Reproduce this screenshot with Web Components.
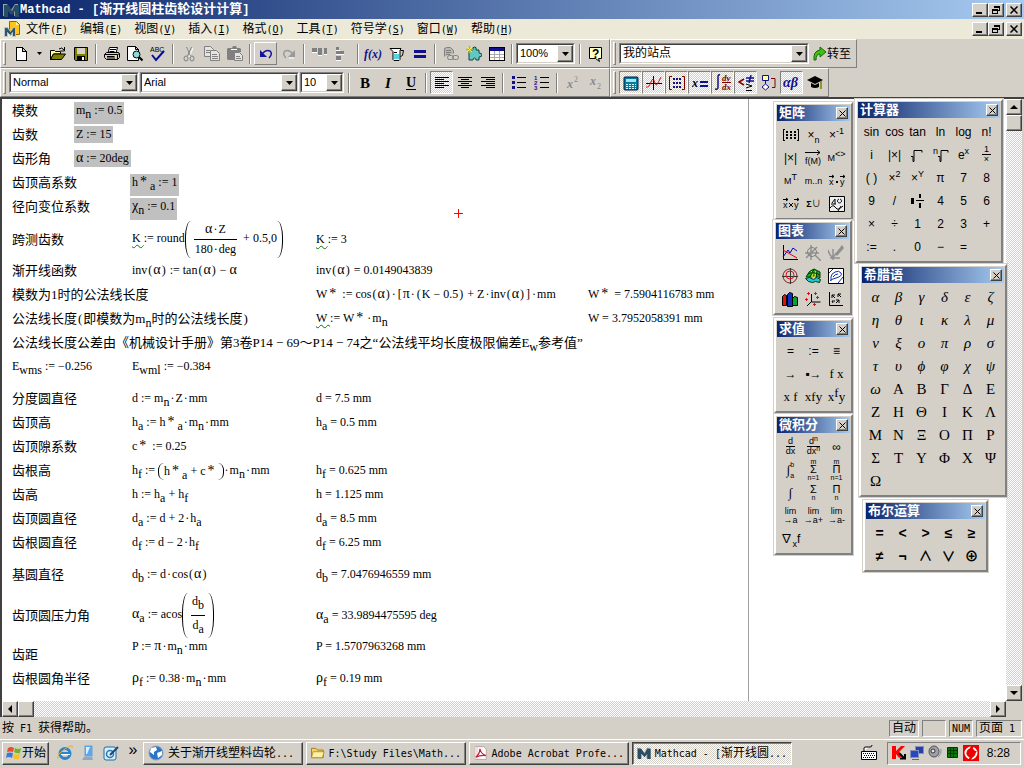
<!DOCTYPE html>
<html lang="zh-CN">
<head>
<meta charset="utf-8">
<title>Mathcad</title>
<style>
  :root {
    --face: #d4d0c8;
    --shadow: #808080;
    --dark: #404040;
    --caption: linear-gradient(to right, #0a246a, #a6caf0);
    --dither: conic-gradient(#fff 25%, #d4d0c8 0 50%, #fff 0 75%, #d4d0c8 0) 0 0 / 2px 2px;
    --ui: "Liberation Sans", "Noto Sans CJK SC", sans-serif;
    --song: "DejaVu Sans Mono", "Noto Sans CJK SC", monospace;
    --math: "Liberation Serif", "Noto Sans CJK SC", serif;
  }

  body {
    margin: 0;
    height: 100vh;
    overflow: hidden;
    display: flex;
    flex-direction: column;
    background: var(--face);
    color: #000;
    font: 12px/16px var(--ui);
  }
</style>
</head>
<body>
<title-bar></title-bar>
<menu-bar></menu-bar>

<tool-row>
  <tool-bar>
    <tool-button icon="new" label="新建"></tool-button>
    <tool-button icon="drop" label="新建选项" narrow></tool-button>
    <tool-button icon="open" label="打开"></tool-button>
    <tool-button icon="save" label="保存"></tool-button>
    <tool-sep></tool-sep>
    <tool-button icon="print" label="打印"></tool-button>
    <tool-button icon="preview" label="打印预览"></tool-button>
    <tool-button icon="spell" label="拼写检查"></tool-button>
    <tool-sep></tool-sep>
    <tool-button icon="cut" label="剪切"></tool-button>
    <tool-button icon="copy" label="复制"></tool-button>
    <tool-button icon="paste" label="粘贴"></tool-button>
    <tool-sep></tool-sep>
    <tool-button icon="undo" label="撤消" raised></tool-button>
    <tool-button icon="redo" label="重做"></tool-button>
    <tool-sep></tool-sep>
    <tool-button icon="across" label="水平对齐"></tool-button>
    <tool-button icon="down" label="垂直对齐"></tool-button>
    <tool-sep></tool-sep>
    <tool-button icon="fx" label="插入函数"></tool-button>
    <tool-button icon="unit" label="插入单位"></tool-button>
    <tool-button icon="calc" label="计算"></tool-button>
    <tool-sep></tool-sep>
    <tool-button icon="link" label="超链接"></tool-button>
    <tool-button icon="component" label="组件"></tool-button>
    <tool-button icon="table" label="表格"></tool-button>
    <tool-sep></tool-sep>
    <combo-box value="100%" label="缩放" style="width:59px"></combo-box>
    <tool-sep></tool-sep>
    <tool-button icon="help" label="帮助"></tool-button>
  </tool-bar>
  <tool-bar>
    <combo-box value="我的站点" label="地址" style="width:190px" wide></combo-box>
    <tool-button icon="go" label="转至" text="转至"></tool-button>
  </tool-bar>
</tool-row>

<tool-row>
  <tool-bar>
    <combo-box value="Normal" label="样式" style="width:130px"></combo-box>
    <combo-box value="Arial" label="字体" style="width:159px"></combo-box>
    <combo-box value="10" label="字号" style="width:44px"></combo-box>
    <tool-sep></tool-sep>
    <tool-button icon="bold" label="加粗"></tool-button>
    <tool-button icon="italic" label="斜体"></tool-button>
    <tool-button icon="under" label="下划线"></tool-button>
    <tool-sep></tool-sep>
    <tool-button icon="left" label="左对齐" pressed></tool-button>
    <tool-button icon="center" label="居中"></tool-button>
    <tool-button icon="right" label="右对齐"></tool-button>
    <tool-sep></tool-sep>
    <tool-button icon="bullets" label="项目符号"></tool-button>
    <tool-button icon="numbers" label="编号"></tool-button>
    <tool-sep></tool-sep>
    <tool-button icon="sup" label="上标"></tool-button>
    <tool-button icon="sub" label="下标"></tool-button>
  </tool-bar>
  <tool-bar>
    <tool-button icon="keypad" label="计算器" pressed></tool-button>
    <tool-button icon="graph" label="图表" pressed></tool-button>
    <tool-button icon="matrix" label="矩阵" pressed></tool-button>
    <tool-button icon="eval" label="求值" pressed></tool-button>
    <tool-button icon="calculus" label="微积分" pressed></tool-button>
    <tool-button icon="boolean" label="布尔运算" pressed></tool-button>
    <tool-button icon="program" label="编程"></tool-button>
    <tool-button icon="greek" label="希腊语" pressed></tool-button>
    <tool-button icon="symbolic" label="符号"></tool-button>
  </tool-bar>
</tool-row>

<work-area>
  <math-sheet></math-sheet>
  <tool-palette slot="float" caption="矩阵" keys="matrix" cols="3" style="left:772px;top:3px"></tool-palette>
  <tool-palette slot="float" caption="图表" keys="graph" cols="3" style="left:771px;top:121px"></tool-palette>
  <tool-palette slot="float" caption="求值" keys="eval" cols="3" style="left:772px;top:219px"></tool-palette>
  <tool-palette slot="float" caption="微积分" keys="calculus" cols="3" style="left:772px;top:315px"></tool-palette>
  <tool-palette slot="float" caption="计算器" keys="calculator" cols="6" style="left:853px;top:0"></tool-palette>
  <tool-palette slot="float" caption="希腊语" keys="greek" cols="6" style="left:857px;top:165px"></tool-palette>
  <tool-palette slot="float" caption="布尔运算" keys="boolean" cols="5" style="left:861px;top:401px"></tool-palette>
</work-area>

<status-bar></status-bar>

<task-bar>
  <task-button icon="earth">关于渐开线塑料齿轮...</task-button>
  <task-button icon="folder">F:\Study Files\Math...</task-button>
  <task-button icon="pdf">Adobe Acrobat Profe...</task-button>
  <task-button icon="logo" active>Mathcad - [渐开线圆...</task-button>
</task-bar>

<script>
const svg = (body, w = 16, h = 16) =>
    `<svg width="${w}" height="${h}" viewBox="0 0 ${w} ${h}" fill="none" stroke-width="1" aria-hidden="true">${body}</svg>`;

const lines = (list, color = '#000') =>
    `<path shape-rendering="crispEdges" stroke="${color}" d="${list.map(([x, y, w]) => `M${x} ${y + .5}h${w}`).join('')}"/>`;

const text = (str, x, y, style) => `<text x="${x}" y="${y}" stroke="none" style="${style}">${str}</text>`;

const serif = 'font-family:Liberation Serif,serif;';
const sans = 'font-family:Liberation Sans,sans-serif;';

const icons = {
  logo: svg(`<path fill="#9aa4a8" d="M0 14V2h4l4 6 4-6h3v12h-4V8l-3 4-3-4v6z"/><path fill="#274e63" d="M1 15V3l4 0 4 6 3-6h4v12h-4V9l-3 4-4-4v6z"/>`),
  doc: svg(`<path fill="#ffc619" stroke="#a05a00" d="M5.500 .5h7l3 3v10h-10z"/><path fill="#fff3b0" d="M12 1v3h3z"/><path fill="#31566c" stroke="#b9c5cc" d="M.5 15.500v-9h3l3 4 3-4h2v9h-3v-4l-2 3-3-3v4z"/>`),
  new: svg(`<path shape-rendering="crispEdges" fill="#fff" stroke="#000" d="M3.500 1.500h6l4 4v9h-10zM9.500 1.500v4h4"/>`),
  drop: svg(`<path fill="#000" d="M0 0h5L2.500 3z"/>`, 5, 3),
  open: svg(`<path fill="#ffff9c" stroke="#000" d="M.5 13.500v-9h4l1 1h5v2.500h-7z"/><path fill="#808000" stroke="#000" d="M.5 13.500l3-5.500h12l-4 5.500z"/><path stroke="#000" d="M9 3q3-2.500 5 1M14.500 1v4h-4"/>`),
  save: svg(`<path fill="#808000" stroke="#000" d="M1.500 1.500h13v13h-12l-1-1z"/><path fill="#d4d0c8" d="M4 2h8v6H4z"/><path fill="#000" d="M4 10h8v4H4z"/><path fill="#fff" d="M9 11h2v3H9z"/>`),
  print: svg(`<path fill="#fff" stroke="#000" d="M4 7l1.500-5.500h8L12 7"/><path fill="#d4d0c8" stroke="#000" d="M.5 8.500l2-2h12l1 1v4l-2 2h-11l-2-2zM.5 8.500h13l2-1M13.500 8.500v5"/><path stroke="#000" d="M6 3.500h6M5.500 5.500h5M3 10.500h8M3 12h8"/><path fill="#ff0" d="M10 9.500h2v1h-2z"/>`),
  preview: svg(`<path fill="#fff" stroke="#000" d="M.5 .5h8l3 3v11H.5zM8.500 .5v3h3"/><circle cx="9.500" cy="8.500" r="3.500" fill="#8cd7d9" stroke="#000"/><path stroke="#000" stroke-width="2" d="M12 11l3.500 3.500"/>`),
  spell: svg(`${text('ABC', 0, 6, sans + 'font-size:7px;fill:#000')}<path stroke="#0a0a96" stroke-width="2" d="M2 9l4 5 8-9"/>`),
  cut: svg(`<path stroke="#fff" d="M6 2l4 9M12 2L8 11"/><path stroke="#808080" d="M5.500 1l4 9M10.500 1l-4 9"/><ellipse cx="5" cy="12.500" rx="2" ry="2.500" stroke="#808080"/><ellipse cx="11" cy="12.500" rx="2" ry="2.500" stroke="#808080"/>`),
  copy: svg(`<path stroke="#808080" fill="#e6e4df" d="M.5 .5h6l3 3v7h-9z"/><path stroke="#808080" fill="#e6e4df" d="M6.500 4.500h6l3 3v7h-9z"/><path stroke="#808080" d="M2 4.500h4M2 6.500h4M8 8.500h5M8 10.500h6M8 12.500h6"/>`),
  paste: svg(`<path fill="#808080" d="M1 2h4l1-2h3l1 2h3l1 1v3H8v8H1L0 13V3z"/><path stroke="#808080" fill="#e6e4df" d="M7.500 6.500h5l3 3v5h-8z"/><path stroke="#808080" d="M9 10.500h4M9 12.500h5"/><path stroke="#fff" d="M4 3.500h6"/>`),
  undo: svg(`<path stroke="#1414a0" stroke-width="1.500" d="M4 8q4-5 8-3q3 3-1 7"/><path fill="#1414a0" d="M2 4v7h7z"/>`),
  redo: svg(`<path stroke="#fff" d="M13 12H8"/><path stroke="#9a9a9a" stroke-width="1.500" d="M12 8q-4-5-8-3q-3 3 1 7"/><path fill="#9a9a9a" d="M14 4v7H7z"/>`),
  across: svg(`<path fill="#808080" d="M0 2h5v4H0zM6 2h4v7H6zM12 2h3v6h-3z"/><path stroke="#fff" d="M0 6.500h5M6 9.500h4M12 8.500h3"/>`),
  down: svg(`<path fill="#808080" d="M1 1h3v3H1zM1 5h8v3H1zM1 10h5v4H1z"/><path stroke="#fff" d="M1 4.500h4M1 8.500h8M1 14.500h5"/>`),
  fx: svg(text('f(x)', 0, 12, serif + 'font-size:12px;font-weight:bold;font-style:italic;fill:#10108c'), 20, 16),
  unit: svg(`<path fill="#fff" stroke="#000" d="M1 2.500h11l-1 2v9l-1 1H5l-1-1v-8z"/><path fill="#58d3e2" d="M5 8h5v5H5z"/><path stroke="#000" d="M11.500 4.500h3l-1 5-2 1M5 6.500h3"/>`),
  calc: svg(`<path fill="#10108c" d="M2 4h12v3H2zM2 9h12v3H2z"/>`),
  link: svg(`<path fill="#b9b6ae" stroke="#808080" d="M1.500 10.500v-8l2-1h4l3 3v3"/><path stroke="#808080" d="M3 4.500h5M3 6.500h5M3 8.500h4"/><rect x="4.500" y="9.500" width="6" height="4" rx="2" stroke="#808080"/><rect x="9.500" y="9.500" width="6" height="4" rx="2" stroke="#808080"/>`),
  component: svg(`<path fill="#62c9c0" stroke="#104040" d="M3 4h4q-1-3 1.500-3T10 4h3v3q3 0 3 2t-3 2v3h-3q0-2-1.500-2T7 14H3v-3z"/><path stroke="#a8c020" stroke-width="1.500" d="M3.500 0v7M0 3.500h7"/><path stroke="#f8f060" d="M1 1l5 5M6 1L1 6"/>`),
  table: svg(`<path fill="#fff" stroke="#000" shape-rendering="crispEdges" d="M.5 1.500h15v13H.5z"/><path fill="#10108c" d="M1 2h14v3H1z"/><path stroke="#aaa" shape-rendering="crispEdges" d="M1 8.500h14M1 11.500h14M5.500 5v9M10.500 5v9"/>`),
  help: svg(`<path fill="#ffffc8" stroke="#000" d="M1.500 1.500h12v11h-3l1 3-4-3h-6z"/>${text('?', 4, 12, sans + 'font-size:12px;font-weight:bold;fill:#000')}`),
  go: svg(`<path fill="#40c010" stroke="#186808" d="M1 14q-1-9 6-10V1l6 5-6 5V8q-4 0-4 6z"/>`, 14, 16),
  bold: svg(text('B', 3, 13, serif + 'font-size:15px;font-weight:bold;fill:#000')),
  italic: svg(text('I', 5, 13, serif + 'font-size:15px;font-weight:bold;font-style:italic;fill:#000')),
  under: svg(text('U', 3, 12, serif + 'font-size:14px;font-weight:bold;fill:#000') + lines([[3, 14, 10]])),
  left: svg(lines([[1, 2, 14], [1, 4, 9], [1, 6, 14], [1, 8, 9], [1, 10, 14], [1, 12, 9]])),
  center: svg(lines([[1, 2, 14], [4, 4, 8], [1, 6, 14], [4, 8, 8], [1, 10, 14], [4, 12, 8]])),
  right: svg(lines([[1, 2, 14], [6, 4, 9], [1, 6, 14], [6, 8, 9], [1, 10, 14], [6, 12, 9]])),
  bullets: svg(`<path fill="#10108c" d="M1 1h3v3H1zM1 6h3v3H1zM1 11h3v3H1z"/>${lines([[6, 2, 9], [6, 7, 9], [6, 12, 9]])}`),
  numbers: svg(`${['1', '2', '3'].map((n, i) => text(n, 0, 5 + i * 5, sans + 'font-size:6px;font-weight:bold;fill:#10108c')).join('')}${lines([[6, 2, 9], [6, 7, 9], [6, 12, 9]])}`),
  sup: svg(text('x', 2, 13, serif + 'font-size:12px;font-weight:bold;font-style:italic;fill:#888') + text('2', 9, 7, serif + 'font-size:8px;fill:#888')),
  sub: svg(text('x', 2, 10, serif + 'font-size:12px;font-weight:bold;font-style:italic;fill:#888') + text('2', 9, 14, serif + 'font-size:8px;fill:#888')),
  keypad: svg(`<rect x="1" y="2" width="14" height="13" rx="1" fill="#087a9a" stroke="#001a50"/><path fill="#9de8f0" d="M3 4h10v3H3z"/><path stroke="#d8f8ff" stroke-dasharray="2 1" d="M3 9.500h10M3 11.500h10M3 13.500h10"/>`),
  graph: svg(`<path stroke="#000" d="M0 8.500h16M7.500 1v14"/><path stroke="#d01010" d="M0 12q3 1 5-5t4 1q1 4 3 0l3-6"/>`),
  matrix: svg(`<path stroke="#800000" d="M3 1.500H.5v13H3M13 1.500h2.500v13H13"/><path fill="#10108c" d="M4 3h2v2H4zM7 3h2v2H7zM10 3h2v2h-2zM4 7h2v2H4zM7 7h2v2H7zM10 7h2v2h-2zM4 11h2v2H4zM7 11h2v2H7zM10 11h2v2h-2z"/>`),
  eval: svg(`${text('x', 0, 12, serif + 'font-size:12px;font-weight:bold;font-style:italic;fill:#000')}<path fill="#10108c" d="M8 6h8v2H8zM8 10h8v2H8z"/>`),
  calculus: svg(`<path stroke="#10108c" stroke-width="1.500" d="M6 1Q4 0 4 3v10q0 3-3 2"/><path stroke="#800000" d="M8 8.500h9"/>${text('dy', 8, 7, serif + 'font-size:9px;font-weight:bold;font-style:italic;fill:#800000')}${text('dx', 8, 16, serif + 'font-size:9px;font-weight:bold;font-style:italic;fill:#800000')}`, 18, 17),
  boolean: svg(`<path stroke="#800000" stroke-width="1.500" d="M6 4L1 7l5 3"/><path stroke="#10108c" stroke-width="1.500" d="M8 3h8M8 6h8M13 0l-2 8"/><path stroke="#000" d="M8 9l6 2-6 2M8 15.500h6"/>`),
  program: svg(`<path fill="#ffff9c" stroke="#10108c" d="M1.500 .5h6v5h-6z"/><path stroke="#10108c" d="M4.500 6v3"/><path fill="#fff" stroke="#10108c" d="M4.500 9L8 12l-3.500 3L1 12z"/><path stroke="#800000" d="M10 3.500h4v9h-3"/>`),
  greek: svg(text('αβ', 0, 12, serif + 'font-size:14px;font-weight:bold;font-style:italic;fill:#10108c'), 17, 16),
  symbolic: svg(`<path fill="#000" d="M0 5l8-4 8 4-8 4zM4 8l4 2 4-2v4q-4 2-8 0z"/><path stroke="#808000" stroke-width="1.500" d="M14 6v8"/>`),
  minimize: svg(`<path fill="#000" d="M0 6h6v2H0z"/>`, 9, 8),
  restore: svg(`<path shape-rendering="crispEdges" stroke="#000" d="M2.500 2V.5h5v4H6M2 1.500h6M.5 3.500h5v4h-5zM0 4.500h6"/>`, 8, 8),
  close: svg(`<path stroke="#000" stroke-width="1.500" d="M.5 .5l7 7M7.500 .5l-7 7"/>`, 8, 8),
  smallclose: svg(`<path stroke="#000" d="M.5 .5l6 6M6.500 .5l-6 6"/>`, 7, 7),
  start: svg(`<path fill="#e8502c" d="M3 3q3-2 6 0L8 7Q5 6 2 7z"/><path fill="#70b428" d="M10 3q3 2 6 0l-1 5q-3 1-6-1z"/><path fill="#3c78d8" d="M2 8q3-1 6 0l-1 5q-3-2-6 0z"/><path fill="#f8c020" d="M9 9q3 1 6 0l-1 5q-3 1-6-1z"/>`),
  ie: svg(`<circle cx="8" cy="8.500" r="5" stroke="#2a86cc" stroke-width="3"/><path stroke="#fff" d="M4 9.500h9"/><path stroke="#2a86cc" stroke-width="2" d="M4 8h9"/><path stroke="#e0b030" d="M1 14Q-1 10 8 4t7-1"/>`),
  msn: svg(`<rect x="4.500" y=".5" width="8" height="11" rx="1" fill="#5aa8ec" stroke="#9cb8d0"/><path fill="#d8f0ff" d="M6 2h4L7 9H6z"/><path fill="#8fa8c0" d="M4 12h8l1 3H2z"/>`),
  outlook: svg(`<rect x="1" y="2" width="12" height="13" rx="2" fill="#d8eef8" stroke="#1f6aa0"/><circle cx="7" cy="9" r="3.500" stroke="#2878b8" stroke-width="1.500"/><path stroke="#184878" stroke-width="2" d="M7 10l8-8"/>`),
  earth: svg(`<circle cx="8" cy="8" r="7" fill="#2c74c8" stroke="#88a0b8"/><path fill="#fff" d="M3 3l5-1 1 3-3 2v3L2 7zM9 8l5-2v4l-4 3z"/>`),
  folder: svg(`<path fill="#f5d464" stroke="#94700c" d="M.5 13.500v-11h5l2 2h7v9z"/><path fill="#fff0a8" stroke="#b08818" d="M.5 13.500l2-7h13l-2 7z"/>`),
  pdf: svg(`<path fill="#fff" stroke="#b89898" d="M1.500 .5h10l3 3v12h-13z"/><path fill="#f4dcdc" d="M1 1h4v14H1z"/><path stroke="#c02040" stroke-width="1.500" d="M2 13Q7 9 7 3q1 6 7 8-6-1-12 2z"/>`),
  keyboard: svg(`<path stroke="#000" fill="#fff" d="M.5 6.500h15v8H.5zM3 6V3q0-1 2-1h4q2 0 2-2"/><path stroke="#000" stroke-dasharray="1 1" d="M2 8.500h12M3 10.500h11M2 12.500h12"/>`),
  kav: svg(`<path fill="#f00" d="M1 1h4v5l5-5h4L8 7l3 4-3 2-3-4v5H1z"/><path stroke="#000" stroke-width="2" d="M8 8l6 6M9 13.500h5V9"/>`),
  net: svg(`<rect x="6.500" y="1.500" width="8" height="7" fill="#2440b0" stroke="#8890b8"/><rect x="1.500" y="5.500" width="8" height="7" fill="#2848c0" stroke="#8890b8"/><path stroke="#606878" d="M3 14.500h7"/>`),
  sound: svg(`<ellipse cx="7" cy="6.500" rx="5" ry="5.500" fill="#a0a0a8" stroke="#505058"/><circle cx="6" cy="6" r="2" fill="#e8e8e8" stroke="#333"/><path stroke="#8090a0" d="M11 12q4-3 3-8"/>`),
  cpu: svg(`<path fill="#087808" stroke="#003c00" d="M2.500 2.500h10v10h-10z"/><path stroke="#003c00" d="M3 5.500h9M3 8.500h9M5.500 3v9M8.500 3v9"/>`),
  bolt: svg(`<path fill="#e00" d="M0 0h16v16H0z"/><circle cx="8" cy="8" r="5.500" stroke="#fff" stroke-width="2"/><path fill="#e00" stroke="#e00" stroke-width="2" d="M10 0L5 8h5l-4 8 6-9H8z"/>`),
  // palette pictures
  root: svg(`<path stroke="#000" d="M1 9.500h2v5h1V3.500h8v2"/>`),
  nroot: svg(`${text('n', 0, 7, sans + 'font-size:9px;fill:#000')}<path stroke="#000" d="M5 9.500h2v5h1V3.500h7v2"/>`),
  mixed: svg(`<path fill="#000" d="M1 5h3v6H1zM9 1h2v4H9zM9 10h2v5H9zM6 7h8v1H6z"/>`),
  xy: svg(`<path stroke="#000" d="M1.500 0v14.500H16"/><path stroke="#0000c0" d="M1 12l5-7 2 3 3-5 4 3"/><path stroke="#e00000" d="M1 5l14 8"/>`),
  zoomplot: svg(`<path stroke="#909090" stroke-width="1.500" d="M0 8h14M6 0v15M1 13L12 2M10 10l6 6"/><circle cx="7" cy="7" r="4.500" stroke="#808080"/>`),
  trace: svg(`<path stroke="#909090" stroke-width="1.500" d="M0 5q4 12 8 3M2 13h10M5 4v11"/><path fill="#909090" d="M7 9l7-9 2 3-7 8z"/>`),
  polar: svg(`<circle cx="8" cy="8" r="7" stroke="#802020"/><path stroke="#333" d="M0 8.500h16M8.500 0v16"/><ellipse cx="8" cy="7" rx="4" ry="4" stroke="#e01010"/>`),
  surface: svg(`<path fill="#20b020" stroke="#043804" d="M1 9q3-7 8-8l6 3v6q-5-4-8-1z"/><path fill="#20c8d8" stroke="#043804" d="M.5 10.500l4-1 4 2 3-2 4 2-1 3-4-1-3 1-4-1z"/><path stroke="#e8e020" stroke-width="1.500" d="M7 3v6M11 3l-1 6"/><path stroke="#043804" d="M3 6q5-3 12 1M9 1L5 9M12 3l-1 7"/>`),
  contour: svg(`<path fill="#fff" stroke="#000" d="M.5 .5h15v15H.5z"/><path stroke="#1030b0" d="M3 9q0-3 4-5t6 1-5 5-5 3zM5 9q2-3 5-3M1 5l4-4M10 15l5-6"/>`),
  bars: svg(`<path fill="#e01010" stroke="#000" d="M.5 5.500l2-2 2 1v10h-4z"/><path fill="#1030c0" stroke="#000" d="M5.500 3.500l2-2 3 1v13h-5z"/><path fill="#10a030" stroke="#000" d="M10.500 7.500l2-2 3 1v8h-5z"/>`),
  scatter: svg(`<path stroke="#000" d="M6.500 3v8h9M6.500 10.500L2 15"/><path stroke="#e01010" d="M2 2.500h3M3.500 1v3M9 2.500h3M10.500 1v3M0 8.500h3M1.500 7v3M11 6.500h3M12.500 5v3M8 13.500h3M9.500 12v3"/>`),
  vectors: svg(`<path stroke="#000" d="M1.500 1v13.500H15M4 4l3 3M4 7V4h3M10 3l3 3M10 6V3h3M8 12l3-3M8 9h3v3M5 12l-1-2h3"/>`),
  mat: svg(`<path stroke="#000" shape-rendering="crispEdges" d="M2 2.500H.5v11H2M14 2.500h1.500v11H14"/><path fill="#000" d="M3 4h2v2H3zM7 4h2v2H7zM11 4h2v2h-2zM3 7h2v2H3zM7 7h2v2H7zM11 7h2v2h-2zM3 10h2v2H3zM7 10h2v2H7zM11 10h2v2h-2z"/>`),
  picture: svg(`<path fill="#eee" stroke="#000" d="M.5 .5h15v15H.5z"/><path stroke="#000" d="M3 7l3-4v5M2 8h5M10 3a2 2 0 1 0 1 0M1 12q3-4 5-1t4 2l4-3M9 15l3-5"/>`),
  vec: svg(`<path stroke="#000" d="M0 2.500h15M12 0l3 2.500L12 5"/>${text('f(M)', 0, 14, sans + 'font-size:9px;fill:#000')}`, 17, 16),
  dotprod: svg(`<path stroke="#000" d="M0 3.500h5M3 2l2 1.500L3 5M11 3.500h5M14 2l2 1.500L14 5"/><path fill="#000" d="M7 8h2v2H7z"/>${text('x', 0, 12, sans + 'font-size:9px;fill:#000')}${text('y', 11, 12, sans + 'font-size:9px;fill:#000')}`),
  crossprod: svg(`<path stroke="#000" d="M0 3.500h5M3 2l2 1.500L3 5M11 3.500h5M14 2l2 1.500L14 5M6 7l4 4M10 7l-4 4"/>${text('x', 0, 12, sans + 'font-size:9px;fill:#000')}${text('y', 11, 12, sans + 'font-size:9px;fill:#000')}`),
};

const frac = (a, b) => `<span class="frac"><span>${a}</span><span>${b}</span></span>`;
const limits = (top, op, bottom) => `<span class="stack"><small>${top}</small><b>${op}</b><small>${bottom}</small></span>`;
const limit = (to) => `<span class="lim"><span>lim</span><span>→${to}</span></span>`;

const keySets = {
  matrix: ['@mat', '×<sub>n</sub>', '×<sup>-1</sup>', '|×|', '@vec', '<s>M</s><sup>&lt;&gt;</sup>', '<s>M</s><sup>T</sup>',
    '<s>m..n</s>', '@dotprod', '@crossprod', '<s><b>Σ</b>∪</s>', '@picture'],
  graph: ['@xy', '@zoomplot', '@trace', '@polar', '@surface', '@contour', '@bars', '@scatter', '@vectors'],
  eval: ['=', ':=', '≡', '→', '▪→', '<i>f x</i>', '<i>x f</i>', '<i>xfy</i>', '<i>x<sup>f</sup>y</i>'],
  calculus: [frac('d', 'dx'), frac('d<sup>n</sup>', 'dx<sup>n</sup>'), '∞', '<i>∫</i><span class="ends"><small>b</small><small>a</small></span>',
    limits('m', 'Σ', 'n=1'), limits('m', 'Π', 'n=1'), '<i>∫</i>', limits('', 'Σ', 'n'), limits('', 'Π', 'n'),
    limit('a'), limit('a+'), limit('a-'), '∇<sub>x</sub>f'],
  calculator: ['sin', 'cos', 'tan', 'ln', 'log', 'n!', 'i', '|×|', '@root', '@nroot', 'e<sup>x</sup>', frac('1', '×'),
    '( )', '×<sup>2</sup>', '×<sup>Y</sup>', 'π', '7', '8', '9', '/', '@mixed', '4', '5', '6', '×', '÷', '1', '2', '3', '+',
    ':=', '.', '0', '−', '='],
  greek: [...'αβγδεζηθικλμνξοπρστυϕφχψω'].map((c) => `<em>${c}</em>`)
      .concat([...'ΑΒΓΔΕΖΗΘΙΚΛΜΝΞΟΠΡΣΤΥΦΧΨΩ'].map((c) => `<u>${c}</u>`)),
  boolean: ['=', '&lt;', '&gt;', '≤', '≥', '≠', '¬', '∧', '∨', '⊕'].map((c) => `<b>${c}</b>`),
};

// Latin runs are set smaller than the Chinese ones, as in a half-width font
const mixed = (str) => str.replace(/[\x20-\x7e]+/g, (run) =>
    `<span class="latin">${run.replace(/&(.)/, '<u>$1</u>')}</span>`);

// gives operators and brackets the air that Mathcad puts round them
const spaced = (html) => html.replace(/[·()[\]]/g, '<span class="op">$&</span>')
    .replace(/\*/g, '<span class="star">*</span>');

const latinStyle = `
  .latin {
    font-family: var(--song);
    font-size: 10px;
    white-space: pre;
  }
`;

const buttonStyle = `
  button {
    box-sizing: border-box;
    padding: 0;
    color: inherit;
    font: inherit;
    background: var(--face);
    border: 1px solid;
    border-color: #fff var(--dark) var(--dark) #fff;
    box-shadow: inset -1px -1px var(--shadow);
    display: flex;
    align-items: center;
    justify-content: center;
  }
`;

class BaseElement extends HTMLElement {
  constructor() {
    super();
    this.attachShadow({mode: 'open'});
  }

  connectedCallback() {
    this.shadowRoot.innerHTML = this.template();
  }
}

class WindowButtons extends BaseElement {
  template() {
    return `
      <style>
        :host { display: flex; padding-right: 2px; }
        ${buttonStyle}
        button { width: 16px; height: 14px; }
        button:last-child { margin-left: 2px; }
      </style>
      <button aria-label="最小化">${icons.minimize}</button>
      <button aria-label="还原">${icons.restore}</button>
      <button aria-label="关闭">${icons.close}</button>`;
  }
}

class TitleBar extends BaseElement {
  template() {
    return `
      <style>
        :host {
          display: flex;
          align-items: center;
          height: 19px;
          gap: 1px;
          padding-left: 3px;
          background: var(--caption);
          color: #fff;
          font-weight: bold;
          font-size: 13px;
        }
        ${latinStyle}
        .latin { font-family: "Liberation Mono", monospace; font-size: 12px; }
        h1 { margin: 0; flex: 1; font: inherit; }
      </style>
      ${icons.logo}<h1>${mixed('Mathcad - [渐开线圆柱齿轮设计计算]')}</h1>
      <window-buttons></window-buttons>`;
  }
}

class MenuBar extends BaseElement {
  template() {
    const items = ['文件(&F)', '编辑(&E)', '视图(&V)', '插入(&I)', '格式(&O)', '工具(&T)', '符号学(&S)', '窗口(&W)', '帮助(&H)'];
    return `
      <style>
        :host {
          display: flex;
          align-items: center;
          height: 20px;
          padding-left: 4px;
          background: #ece9d8;
        }
        ${latinStyle}
        nav { display: flex; flex: 1; gap: 12px; padding-left: 6px; }
        button { padding: 0; border: 0; background: none; font: inherit; }
      </style>
      ${icons.doc}
      <nav>${items.map((item) => `<button>${mixed(item)}</button>`).join('')}</nav>
      <window-buttons></window-buttons>`;
  }
}

class ToolRow extends BaseElement {
  template() {
    return `
      <style>
        :host {
          display: flex;
          height: 29px;
        }
      </style>
      <slot></slot>`;
  }
}

class ToolBar extends BaseElement {
  template() {
    return `
      <style>
        :host {
          display: flex;
          align-items: center;
          box-sizing: border-box;
          padding: 0 2px;
          border-top: 1px solid #fff;
          border-right: 1px solid var(--shadow);
          border-bottom: 1px solid var(--shadow);
          border-left: 1px solid #fff;
        }
        .grip {
          box-sizing: border-box;
          width: 3px;
          height: 23px;
          margin-right: 3px;
          border: 1px solid;
          border-color: #fff var(--shadow) var(--shadow) #fff;
        }
      </style>
      <span class="grip"></span><slot></slot>`;
  }
}

class ToolSep extends BaseElement {
  template() {
    return `
      <style>
        :host {
          width: 2px;
          height: 20px;
          margin: 0 3px;
          box-sizing: border-box;
          border-left: 1px solid var(--shadow);
          border-right: 1px solid #fff;
        }
      </style>`;
  }
}

class ToolButton extends BaseElement {
  template() {
    return `
      <style>
        button {
          box-sizing: border-box;
          width: 23px;
          height: 23px;
          padding: 0;
          border: 1px solid transparent;
          background: none;
          font: 12px/16px var(--ui);
          display: flex;
          align-items: center;
          justify-content: center;
        }
        svg { flex: none; }
        :host([narrow]) button { width: 14px; }
        :host([text]) button { width: 44px; }
        :host([raised]) button { border-color: #fff var(--shadow) var(--shadow) #fff; }
        :host([pressed]) button {
          border-color: var(--shadow) #fff #fff var(--shadow);
          background: var(--dither);
        }
      </style>
      <button aria-label="${this.getAttribute('label')}">${icons[this.getAttribute('icon')]}${this.getAttribute('text') || ''}</button>`;
  }
}

class ComboBox extends BaseElement {
  template() {
    return `
      <style>
        :host {
          display: grid;
          box-sizing: border-box;
          height: 21px;
          margin-right: 1px;
          border: 1px solid;
          border-color: var(--shadow) #fff #fff var(--shadow);
        }
        select, .arrow { grid-area: 1 / 1; }
        select {
          appearance: none;
          min-width: 0;
          padding: 0 18px 0 2px;
          border: 1px solid;
          border-color: var(--dark) var(--face) var(--face) var(--dark);
          border-radius: 0;
          background: #fff;
          color: #000;
          font: 11px/15px var(--ui);
        }
        :host([wide]) select { font-size: 12px; }
        .arrow {
          justify-self: end;
          box-sizing: border-box;
          width: 16px;
          margin: 1px;
          background: var(--face);
          border: 1px solid;
          border-color: #fff var(--dark) var(--dark) #fff;
          box-shadow: inset -1px -1px var(--shadow);
          display: flex;
          align-items: center;
          justify-content: center;
          pointer-events: none;
        }
      </style>
      <select aria-label="${this.getAttribute('label')}"><option>${this.getAttribute('value')}</option></select>
      <span class="arrow">${svg('<path fill="#000" d="M0 0h7L3.500 4z"/>', 7, 4)}</span>`;
  }
}

class WorkArea extends BaseElement {
  template() {
    const arrow = (d) => svg(`<path fill="#000" d="${d}"/>`, 8, 8);
    return `
      <style>
        :host {
          position: relative;
          flex: 1;
          min-height: 0;
          display: grid;
          grid-template: minmax(0, 1fr) 16px / minmax(0, 1fr) 16px;
          padding-right: 2px;
          border-top: 2px solid var(--dark);
          border-left: 2px solid var(--dark);
        }
        ${buttonStyle}
        button { width: 16px; height: 16px; flex: none; }
        .bar { display: flex; background: var(--dither); }
        .v { flex-direction: column; }
        .end { margin-left: auto; }
        .v .end { margin: auto 0 0; }
      </style>
      <slot></slot>
      <div class="bar v">
        <button aria-label="向上">${arrow('M4 2l4 4H0z')}</button><button aria-label="垂直滚动块"></button>
        <button class="end" aria-label="向下">${arrow('M4 6l4-4H0z')}</button>
      </div>
      <div class="bar">
        <button aria-label="向左">${arrow('M2 4l4-4v8z')}</button><button aria-label="水平滚动块"></button>
        <button class="end" aria-label="向右">${arrow('M6 4L2 0v8z')}</button>
      </div>
      <slot name="float"></slot>`;
  }
}

class SheetRow extends BaseElement {
  template() {
    return `
      <style>
        :host {
          display: grid;
          grid-template-columns: 64px 56px 184px 272px auto;
          grid-template-rows: 24px;
          align-items: start;
          white-space: pre;
        }
        :host([gap]) { margin-top: 8px; }
        :host([tall]) { grid-template-rows: 40px; align-items: center; }
        :host([loose]) { grid-template-rows: 32px; }
        ::slotted(*) {
          grid-row: 1;
          justify-self: start;
          padding: 0 2px;
          margin: 3px 0 0 -2px;
        }
        :host([tall]) ::slotted(*) { margin-top: 0; }
        ::slotted(b) { grid-column: 1 / -1; }
        :host([loose]) ::slotted(b) { align-self: end; margin-bottom: 4px; }
        ::slotted(.in) { grid-column: 2 / -1; }
        ::slotted(.def) { grid-column: 3 / -1; }
        ::slotted(.val) { grid-column: 4 / -1; }
        ::slotted(.far) { grid-column: 5 / -1; }
      </style>
      <slot></slot>`;
  }
}

class MathFrac extends BaseElement {
  template() {
    return `
      <style>
        :host {
          display: inline-flex;
          flex-direction: column;
          align-items: center;
          vertical-align: middle;
          margin: 0 3px;
        }
        span { padding: 0 1px; line-height: 17px; }
        :host([deep]) span { line-height: 17px; padding-bottom: 4px; }
        hr { width: 100%; margin: 1px 0; border: 0; height: 1px; background: #000; }
      </style>
      <span><slot name="top"></slot></span><hr><span><slot></slot></span>`;
  }
}

class MathParens extends BaseElement {
  template() {
    return `
      <style>
        :host { display: inline-flex; align-items: center; vertical-align: middle; }
        .l, .r {
          align-self: stretch;
          width: 5px;
          border: 0 solid #000;
        }
        .l { border-left-width: 1px; border-radius: 7px 0 0 7px / 50% 0 0 50%; }
        .r { border-right-width: 1px; border-radius: 0 7px 7px 0 / 0 50% 50% 0; }
      </style>
      <i class="l"></i><span><slot></slot></span><i class="r"></i>`;
  }
}

class MathSheet extends BaseElement {
  template() {
    return `
      <style>
        :host {
          position: relative;
          overflow: hidden;
          background: #fff linear-gradient(#a0a0a0, #a0a0a0) 746px 0 / 1px 100% no-repeat;
          padding-left: 10px;
          font: 12px/17px var(--math);
        }
        b { font-weight: normal; font-size: 13px; }
        sub { font-size: 12px; line-height: 0; vertical-align: -4px; }
        .sel { background: #c0c0c0; }
        .sel.deep { padding-bottom: 5px; }
        .bad { text-decoration: underline wavy #107010 1px; text-underline-offset: 2px; }
        .a { font-size: 14px; line-height: 0; }
        .op { padding: 0 1px; }
        .star { font-size: 14px; line-height: 0; padding-left: 2px; }
        .cross { position: absolute; left: 452px; top: 107px; }
      </style>
      ${spaced(`
      <sheet-row><b>模数</b><span class="in sel deep">m<sub>n</sub> := 0.5</span></sheet-row>
      <sheet-row><b>齿数</b><span class="in sel">Z := 15</span></sheet-row>
      <sheet-row><b>齿形角</b><span class="in sel"><span class="a">α</span> := 20deg</span></sheet-row>
      <sheet-row><b>齿顶高系数</b><span class="def sel deep">h* <sub>a</sub> := 1</span></sheet-row>
      <sheet-row><b>径向变位系数</b><span class="def sel deep"><span class="a">χ</span><sub>n</sub> := 0.1</span></sheet-row>
      <sheet-row tall><b>跨测齿数</b><span class="def"><span class="bad">K </span>:= round<math-parens><math-frac><span slot="top"><span class="a">α</span>·Z</span>180·deg</math-frac> + 0.5,0</math-parens></span><span class="val"><span class="bad">K </span>:= 3</span></sheet-row>
      <sheet-row><b>渐开线函数</b><span class="def">inv(<span class="a">α</span>) := tan(<span class="a">α</span>) − <span class="a">α</span></span><span class="val">inv(<span class="a">α</span>) = 0.0149043839</span></sheet-row>
      <sheet-row><b>模数为1时的公法线长度</b><span class="val">W*  := cos(<span class="a">α</span>)·[<span class="a">π</span>·(K − 0.5) + Z·inv(<span class="a">α</span>)]·mm</span><span class="far">W*  = 7.5904116783 mm</span></sheet-row>
      <sheet-row><b>公法线长度(即模数为m<sub>n</sub>时的公法线长度)</b><span class="val"><span class="bad">W </span>:= W* ·m<sub>n</sub></span><span class="far">W = 3.7952058391 mm</span></sheet-row>
      <sheet-row><b>公法线长度公差由《机械设计手册》第3卷P14 − 69～P14 − 74之“公法线平均长度极限偏差E<sub>w</sub>参考值”</b></sheet-row>
      <sheet-row><span>E<sub>wms</sub> := −0.256</span><span class="def">E<sub>wml</sub> := −0.384</span></sheet-row>
      <sheet-row gap><b>分度圆直径</b><span class="def">d := m<sub>n</sub>·Z·mm</span><span class="val">d = 7.5 mm</span></sheet-row>
      <sheet-row><b>齿顶高</b><span class="def">h<sub>a</sub> := h* <sub>a</sub>·m<sub>n</sub>·mm</span><span class="val">h<sub>a</sub> = 0.5 mm</span></sheet-row>
      <sheet-row><b>齿顶隙系数</b><span class="def">c*  := 0.25</span></sheet-row>
      <sheet-row><b>齿根高</b><span class="def">h<sub>f</sub> := <math-parens>h* <sub>a</sub> + c* </math-parens>·m<sub>n</sub>·mm</span><span class="val">h<sub>f</sub> = 0.625 mm</span></sheet-row>
      <sheet-row><b>齿高</b><span class="def">h := h<sub>a</sub> + h<sub>f</sub></span><span class="val">h = 1.125 mm</span></sheet-row>
      <sheet-row><b>齿顶圆直径</b><span class="def">d<sub>a</sub> := d + 2·h<sub>a</sub></span><span class="val">d<sub>a</sub> = 8.5 mm</span></sheet-row>
      <sheet-row><b>齿根圆直径</b><span class="def">d<sub>f</sub> := d − 2·h<sub>f</sub></span><span class="val">d<sub>f</sub> = 6.25 mm</span></sheet-row>
      <sheet-row gap><b>基圆直径</b><span class="def">d<sub>b</sub> := d·cos(<span class="a">α</span>)</span><span class="val">d<sub>b</sub> = 7.0476946559 mm</span></sheet-row>
      <sheet-row gap tall><b>齿顶圆压力角</b><span class="def"><span class="a">α</span><sub>a</sub> := acos<math-parens><math-frac deep><span slot="top">d<sub>b</sub></span>d<sub>a</sub></math-frac></math-parens></span><span class="val"><span class="a">α</span><sub>a</sub> = 33.9894475595 deg</span></sheet-row>
      <sheet-row loose><b>齿距</b><span class="def">P := <span class="a">π</span>·m<sub>n</sub>·mm</span><span class="val">P = 1.5707963268 mm</span></sheet-row>
      <sheet-row><b>齿根圆角半径</b><span class="def"><span class="a">ρ</span><sub>f</sub> := 0.38·m<sub>n</sub>·mm</span><span class="val"><span class="a">ρ</span><sub>f</sub> = 0.19 mm</span></sheet-row>`)}
      <span class="cross">${svg('<path stroke="#f00" shape-rendering="crispEdges" d="M0 4.500h9M4.500 0v9"/>', 9, 9)}</span>`;
  }
}

class ToolPalette extends BaseElement {
  template() {
    const keys = keySets[this.getAttribute('keys')].map((key) =>
        `<button>${key[0] === '@' ? icons[key.slice(1)] : key}</button>`);
    return `
      <style>
        :host {
          position: absolute;
          padding: 1px;
          background: var(--face);
          border: 2px solid;
          border-color: #fff var(--shadow) var(--shadow) #fff;
          outline: 1px solid var(--face);
        }
        header {
          display: flex;
          align-items: center;
          justify-content: space-between;
          height: 16px;
          padding: 0 2px;
          background: var(--caption);
          color: #fff;
          font: bold 13px/16px var(--ui);
        }
        ${buttonStyle}
        header button { width: 12px; height: 12px; }
        .keys {
          display: grid;
          grid-template-columns: repeat(${this.getAttribute('cols')}, 23px);
          grid-auto-rows: 23px;
          padding: 2px;
        }
        .keys button {
          border: 0;
          box-shadow: none;
          background: none;
          color: #000;
          font: 12px/12px var(--ui);
          white-space: nowrap;
        }
        sub, sup { font-size: 9px; line-height: 0; }
        sup { align-self: start; padding-top: 8px; }
        sub { align-self: end; padding-bottom: 6px; }
        s { font-size: 9px; text-decoration: none; }
        em, u, i { font-family: var(--math); font-size: 15px; text-decoration: none; }
        i { font-size: 13px; font-style: normal; }
        i sup { font-size: 13px; vertical-align: 4px; }
        button > b { font-size: 14px; }
        .frac, .stack, .lim, .ends {
          display: flex;
          flex-direction: column;
          align-items: center;
          font-size: 9px;
          line-height: 9px;
        }
        .frac span:first-child { border-bottom: 1px solid #000; padding: 0 2px; }
        .frac sup { font-size: 7px; vertical-align: 3px; }
        .stack b { font: 11px/9px var(--ui); }
        .ends { gap: 4px; }
        small { font-size: 7px; line-height: 7px; }
      </style>
      <header>${this.getAttribute('caption')}<button aria-label="关闭">${icons.smallclose}</button></header>
      <div class="keys">${keys.join('')}</div>`;
  }
}

class StatusBar extends BaseElement {
  template() {
    return `
      <style>
        :host {
          display: flex;
          align-items: center;
          gap: 3px;
          height: 22px;
          padding: 0 2px;
        }
        ${latinStyle}
        p { margin: 0; flex: 1; }
        span.cell {
          box-sizing: border-box;
          height: 17px;
          min-width: 24px;
          padding: 0 2px;
          border: 1px solid;
          border-color: var(--shadow) #fff #fff var(--shadow);
          line-height: 15px;
        }
        span.page { min-width: 46px; }
      </style>
      <p>${mixed('按 F1 获得帮助。')}</p>
      <span class="cell">自动</span><span class="cell"></span><span class="cell">${mixed('NUM')}</span>
      <span class="cell page">${mixed('页面 1')}</span>`;
  }
}

class TaskButton extends BaseElement {
  template() {
    return `
      <style>
        :host { display: block; width: 160px; }
        ${latinStyle}
        ${buttonStyle}
        button {
          width: 100%;
          height: 23px;
          padding: 0 4px;
          gap: 4px;
          justify-content: start;
          white-space: nowrap;
        }
        :host([active]) button {
          background: var(--dither);
          border-color: var(--dark) #fff #fff var(--dark);
          box-shadow: inset 1px 1px var(--shadow);
        }
      </style>
      <button>${icons[this.getAttribute('icon')]}<span>${mixed(this.textContent)}</span></button>`;
  }
}

class TaskBar extends BaseElement {
  template() {
    return `
      <style>
        :host {
          display: flex;
          align-items: center;
          box-sizing: border-box;
          height: 29px;
          padding: 0 3px 2px 2px;
          border-top: 1px solid #fff;
        }
        ${buttonStyle}
        .start { width: 47px; height: 23px; gap: 1px; }
        .quick { display: flex; align-items: center; gap: 7px; padding: 0 3px 0 8px; }
        .quick button { border: 0; box-shadow: none; background: none; }
        .quick .more { width: 14px; font-size: 16px; line-height: 12px; padding-bottom: 6px; }
        .tasks { display: flex; gap: 3px; flex: 1; }
        .tray {
          display: flex;
          align-items: center;
          gap: 2px;
          box-sizing: border-box;
          height: 23px;
          margin-left: 10px;
          padding: 0 10px 0 3px;
          border: 1px solid;
          border-color: var(--shadow) #fff #fff var(--shadow);
        }
        time { padding-left: 6px; }
      </style>
      <button class="start">${icons.start}<span>开始</span></button>
      <div class="quick">
        <button aria-label="Internet Explorer">${icons.ie}</button>
        <button aria-label="MSN">${icons.msn}</button>
        <button aria-label="Outlook Express">${icons.outlook}</button>
        <button class="more">»</button>
      </div>
      <div class="tasks"><slot></slot></div>
      ${icons.keyboard}
      <div class="tray">${icons.kav}${icons.net}${icons.sound}${icons.cpu}${icons.bolt}<time>8:28</time></div>`;
  }
}

customElements.define('window-buttons', WindowButtons);
customElements.define('title-bar', TitleBar);
customElements.define('menu-bar', MenuBar);
customElements.define('tool-row', ToolRow);
customElements.define('tool-bar', ToolBar);
customElements.define('tool-sep', ToolSep);
customElements.define('tool-button', ToolButton);
customElements.define('combo-box', ComboBox);
customElements.define('work-area', WorkArea);
customElements.define('sheet-row', SheetRow);
customElements.define('math-frac', MathFrac);
customElements.define('math-parens', MathParens);
customElements.define('math-sheet', MathSheet);
customElements.define('tool-palette', ToolPalette);
customElements.define('status-bar', StatusBar);
customElements.define('task-button', TaskButton);
customElements.define('task-bar', TaskBar);
</script>
</body>
</html>
